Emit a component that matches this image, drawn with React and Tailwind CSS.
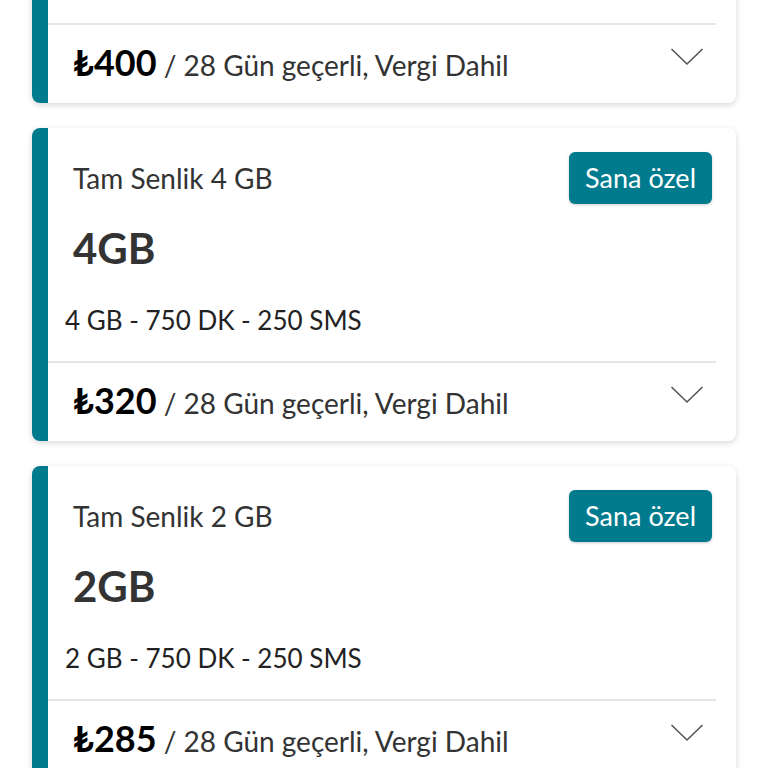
import { useState } from 'react';

const plans = [
  { name: 'Tam Senlik 8 GB', gb: '8GB', spec: '8 GB - 750 DK - 250 SMS', price: '400' },
  { name: 'Tam Senlik 4 GB', gb: '4GB', spec: '4 GB - 750 DK - 250 SMS', price: '320' },
  { name: 'Tam Senlik 2 GB', gb: '2GB', spec: '2 GB - 750 DK - 250 SMS', price: '285' },
];

function Chevron() {
  return (
    <svg width="34" height="20" viewBox="0 0 34 20" fill="none" className="text-[#555]">
      <polyline points="1.5,2 17,17 32.5,2" stroke="currentColor" strokeWidth="1.6" />
    </svg>
  );
}

function PlanCard({ plan }) {
  const [open, setOpen] = useState(false);

  return (
    <div className="flex rounded-lg bg-white shadow-[0_2px_6px_rgba(0,0,0,0.16)] overflow-hidden">
      <div className="w-4 shrink-0 bg-[#007b8e]" />
      <div className="flex-1">
        <div className="h-[233px] pt-6 pr-6">
          <div className="flex items-start justify-between">
            <div className="pl-[25px] pt-[11px] text-[28px] leading-[30px] text-[#333]">{plan.name}</div>
            <span className="h-[52px] px-4 rounded-md bg-[#007b8e] text-white text-[27px] leading-[52px] shadow-[0_1px_3px_rgba(0,0,0,0.2)]">
              Sana özel
            </span>
          </div>
          <div className="pl-[25px] mt-[19px] text-[42px] font-bold leading-[50px] text-[#333]">{plan.gb}</div>
          <div className="pl-[17px] mt-[32px] text-[26px] leading-[30px] text-[#222]">{plan.spec}</div>
        </div>
        <div className="mr-5 border-t-2 border-[#e6e6e6]" />
        <button
          onClick={() => setOpen(!open)}
          className="w-full h-[78px] flex items-center justify-between pl-[25px] pr-8 text-left"
        >
          <span className="text-[#222] -mt-[4px]">
            <span className="text-[36px] font-bold text-black">₺{plan.price}</span>
            <span className="text-[28px] text-[#333]"> / 28 Gün geçerli, Vergi Dahil</span>
          </span>
          <span className="-mt-[14px]"><Chevron /></span>
        </button>
      </div>
    </div>
  );
}

export default function App() {
  return (
    <div className="h-[768px] overflow-hidden bg-white font-['Lato',sans-serif]">
      <div className="-mt-[210px] px-8 flex flex-col gap-[25px]">
        {plans.map((p) => (
          <PlanCard key={p.price} plan={p} />
        ))}
      </div>
    </div>
  );
}
